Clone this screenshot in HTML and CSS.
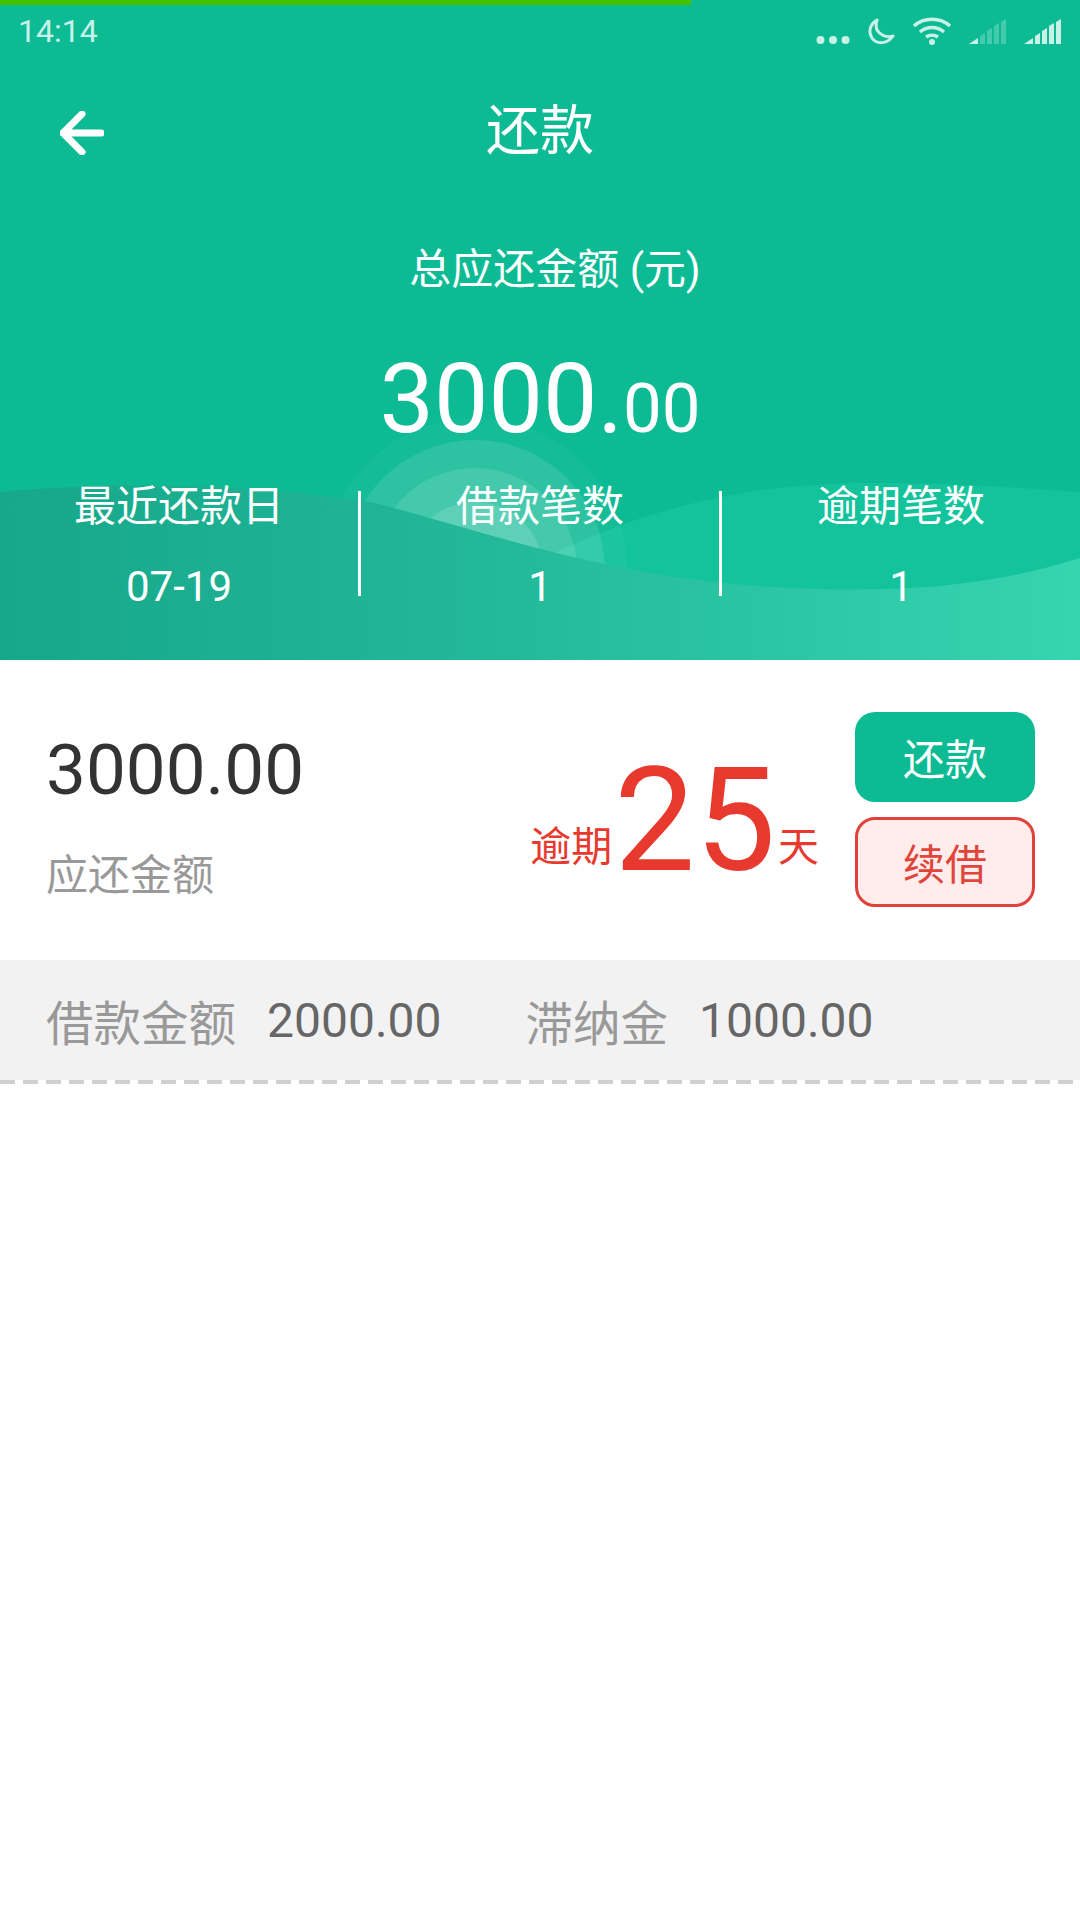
FILE: index.html
```html
<!DOCTYPE html>
<html lang="zh-CN">
<head>
    <meta charset="UTF-8">
    <meta content="width=device-width, initial-scale=1.0" name="viewport">
    <title>还款</title>
    <link rel="stylesheet" href="styles.css">
</head>
<body>
<div class="progress"></div>
<header class="hero">
    <svg class="hero-bg" viewBox="0 0 1080 660" aria-hidden="true">
        <defs>
            <linearGradient id="front" x1="0" y1="0" x2="1" y2="0">
                <stop offset="0" stop-color="#17a78a"/>
                <stop offset="0.4" stop-color="#20b697"/>
                <stop offset="1" stop-color="#37d4b0"/>
            </linearGradient>
        </defs>
        <path fill="#12c39c" d="M540 560C620 520 720 485 860 483C950 482 1020 488 1080 492V660H540Z"/>
        <circle cx="475" cy="570" r="152" fill="#fff" opacity="0.04"/>
        <circle cx="475" cy="570" r="130" fill="#fff" opacity="0.1"/>
        <circle cx="475" cy="570" r="102" fill="#fff" opacity="0.12"/>
        <circle cx="475" cy="570" r="68" fill="#fff" opacity="0.14"/>
        <path fill="url(#front)" d="M0 492C100 482 250 482 375 503C480 530 600 575 760 586C880 594 980 590 1080 558V660H0Z"/>
    </svg>
    <div class="status">
        <span class="time">14:14</span>
        <div class="status-icons">
            <svg width="34" height="10" viewBox="0 0 34 10"><circle cx="4.500" cy="5" r="4" fill="#c8f2e8"/><circle cx="17" cy="5" r="4" fill="#c8f2e8"/><circle cx="29.500" cy="5" r="4" fill="#c8f2e8"/></svg>
            <svg width="28" height="27" viewBox="0 0 28 27"><path fill="none" stroke="#c8f2e8" stroke-width="3" stroke-linecap="round" stroke-linejoin="round" d="M10 2C3 6 1 14 5 20C9 26 20 27 26 18C19 20 13 17 10 12C8.500 8 9 5 10 2Z"/></svg>
            <svg width="40" height="28" viewBox="0 0 40 28"><g fill="none" stroke="#c8f2e8" stroke-width="3.500"><path d="M2 9C12 0 28 0 38 9"/><path d="M8 15C15 9 25 9 32 15"/><path d="M14 20C17.500 17.500 22.500 17.500 26 20"/></g><circle cx="20" cy="25" r="3" fill="#c8f2e8"/></svg>
            <svg width="38" height="26" viewBox="0 0 38 26"><path fill="#c8f2e8" d="M0 25L9 19V25Z"/><path fill="#c8f2e8" opacity="0.3" d="M11 17L16 14V25H11ZM18 12L23 9V25H18ZM25 7L30 4V25H25ZM32 3L37 0V25H32Z"/></svg>
            <svg width="38" height="26" viewBox="0 0 38 26"><path fill="#c8f2e8" d="M0 25L9 19V25ZM11 17L16 14V25H11ZM18 12L23 9V25H18ZM25 7L30 4V25H25ZM32 3L37 0V25H32Z"/></svg>
        </div>
    </div>
    <div class="nav">
        <svg class="back" width="44" height="44" viewBox="0 0 44 44"><path fill="none" stroke="#fff" stroke-width="7" stroke-linecap="round" stroke-linejoin="round" d="M22 3L3 22L22 41M3 22H41"/></svg>
        <h1 class="nav-title">还款</h1>
    </div>
    <div class="total-label">总应还金额 (元)</div>
    <div class="total">3000.<small>00</small></div>
    <div class="stats">
        <div class="stat"><span>最近还款日</span><span>07-19</span></div>
        <i class="stat-line"></i>
        <div class="stat"><span>借款笔数</span><span>1</span></div>
        <i class="stat-line"></i>
        <div class="stat"><span>逾期笔数</span><span>1</span></div>
    </div>
</header>
<section class="loan">
    <div class="due">
        <div class="due-amount">3000.00</div>
        <div class="due-label">应还金额</div>
    </div>
    <div class="overdue"><span>逾期</span><b>25</b><span>天</span></div>
    <div class="actions">
        <a class="btn btn-pay" href="javascript:">还款</a>
        <a class="btn btn-renew" href="javascript:">续借</a>
    </div>
</section>
<section class="detail">
    <span class="detail-key">借款金额</span><span class="detail-val first">2000.00</span>
    <span class="detail-key">滞纳金</span><span class="detail-val">1000.00</span>
</section>
</body>
</html>
```

FILE: styles.css
```css
* {
    box-sizing: border-box;
}

body {
    margin: 0;
    height: 1920px;
    overflow: hidden;
    position: relative;
    background: #fff;
    font-family: Roboto, "Noto Sans CJK SC", sans-serif;
}

.progress {
    position: absolute;
    z-index: 3;
    top: 0;
    left: 0;
    width: 691px;
    height: 5px;
    background: #42c200;
}

.hero {
    position: relative;
    height: 660px;
    background: #0cba94;
    color: #fff;
    overflow: hidden;
}

.hero-bg {
    position: absolute;
    top: 0;
    left: 0;
    width: 1080px;
    height: 660px;
}

.status,
.nav,
.total-label,
.total,
.stats {
    position: relative;
}

.status {
    display: flex;
    justify-content: space-between;
    align-items: center;
    height: 62px;
    padding: 0 18px;
}

.time {
    font-size: 32px;
    color: #c8f2e8;
}

.status-icons {
    display: flex;
    align-items: flex-end;
    gap: 17px;
}

.nav {
    display: flex;
    align-items: center;
    justify-content: center;
    height: 128px;
}

.back {
    position: absolute;
    left: 60px;
    top: 49px;
}

.nav-title {
    margin: 0;
    font-size: 54px;
    font-weight: 400;
}

.total-label {
    margin-top: 50px;
    padding-left: 30px;
    text-align: center;
    font-size: 42px;
    line-height: 60px;
}

.total {
    margin-top: 44px;
    text-align: center;
    font-size: 97px;
    line-height: 110px;
}

.total small {
    font-size: 69px;
}

.stats {
    display: grid;
    grid-template-columns: 1fr 3px 1fr 3px 1fr;
    margin-top: 13px;
}

.stat {
    display: flex;
    flex-direction: column;
    align-items: center;
    gap: 20px;
    font-size: 42px;
    line-height: 60px;
}

.stat-line {
    align-self: start;
    height: 105px;
    margin-top: 14px;
    background: #fff;
}

.loan {
    display: flex;
    align-items: flex-start;
    height: 300px;
    padding: 52px 45px 0 46px;
}

.due {
    flex: 1;
    margin-top: 16px;
}

.due-amount {
    font-size: 71px;
    line-height: 84px;
    color: #333;
}

.due-label {
    margin-top: 34px;
    font-size: 42px;
    line-height: 60px;
    color: #999;
}

.overdue {
    display: flex;
    align-items: flex-end;
    margin: 37px 36px 0 0;
    color: #e8392e;
}

.overdue span {
    margin-bottom: 25px;
    font-size: 41px;
    line-height: 42px;
}

.overdue b {
    margin: 0 2px;
    font-size: 144px;
    line-height: 144px;
    font-weight: 400;
}

.actions {
    display: flex;
    flex-direction: column;
    gap: 15px;
    width: 180px;
}

.btn {
    display: flex;
    align-items: center;
    justify-content: center;
    height: 90px;
    padding-bottom: 2px;
    border-radius: 20px;
    font-size: 42px;
    text-decoration: none;
}

.btn-pay {
    color: #fff;
    background: #0cba94;
}

.btn-renew {
    color: #e0453c;
    background: #ffeceb;
    border: 3px solid #e0413a;
}

.detail {
    display: flex;
    align-items: center;
    height: 124px;
    padding: 0 0 3px 46px;
    background: #f2f2f2 repeating-linear-gradient(90deg, #d0d0d0 0 15px, #fff 15px 23px) left bottom / 100% 4px no-repeat;
    font-size: 48px;
}

.detail-key {
    color: #999;
    margin-right: 31px;
    font-size: 47.5px;
}

.detail-val {
    color: #666;
}

.detail-val.first {
    margin-right: 84px;
}
```
